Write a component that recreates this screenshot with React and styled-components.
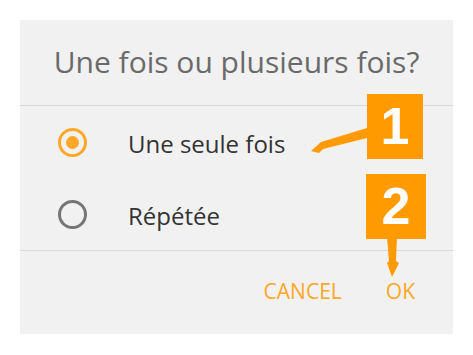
import React, { useState } from "react";
import styled, { createGlobalStyle } from "styled-components";

const GlobalStyle = createGlobalStyle`
  html, body {
    margin: 0;
    padding: 0;
    background: #ffffff;
  }
  body {
    font-family: "Open Sans", "Noto Sans", sans-serif;
  }
`;

const options = ["Une seule fois", "Répétée"];

export default function App() {
  const [selected, setSelected] = useState(0);

  return (
    <Page>
      <GlobalStyle />
      <Dialog>
        <Title>Une fois ou plusieurs fois?</Title>
        <OptionList>
          {options.map((label, i) => (
            <Option key={label} onClick={() => setSelected(i)}>
              <Radio checked={selected === i} />
              <OptionLabel>{label}</OptionLabel>
            </Option>
          ))}
        </OptionList>
        <Footer>
          <TextButton>CANCEL</TextButton>
          <TextButton>OK</TextButton>
        </Footer>

        <Callout top={74} left={347}>1</Callout>
        <Arrow width="80" height="40" viewBox="0 0 80 40" top={98} left={289}>
          <polygon points="58,10 58,20 14,31 10,35 2,33 12,24" fill="#ff9b00" />
        </Arrow>

        <Callout top={154} left={346} wide>2</Callout>
        <Arrow width="30" height="42" viewBox="0 0 30 42" top={217} left={357}>
          <polygon points="10,0 20,0 19,24 22,26 15,40 10,26 12,24" fill="#ff9b00" />
        </Arrow>
      </Dialog>
    </Page>
  );
}

const Page = styled.div`
  padding: 20px;
`;

const Dialog = styled.div`
  position: relative;
  width: 433px;
  height: 314px;
  background: #f1f1f1;
  display: flex;
  flex-direction: column;
`;

const Title = styled.div`
  height: 86px;
  display: flex;
  align-items: center;
  justify-content: center;
  font-size: 30px;
  color: #6a6a6a;
  border-bottom: 1px solid #d8d8d8;
  box-sizing: border-box;
  padding-bottom: 2px;
`;

const OptionList = styled.div`
  display: flex;
  flex-direction: column;
  border-bottom: 1px solid #d8d8d8;
`;

const Option = styled.div`
  height: 72px;
  display: flex;
  align-items: center;
  padding-left: 38px;
  cursor: pointer;
`;

const Radio = styled.span`
  width: 29px;
  height: 29px;
  box-sizing: border-box;
  border-radius: 50%;
  border: 3px solid ${(p) => (p.checked ? "#ffa726" : "#757575")};
  display: flex;
  align-items: center;
  justify-content: center;

  &::after {
    content: "";
    width: 13px;
    height: 13px;
    border-radius: 50%;
    background: #ffa726;
    display: ${(p) => (p.checked ? "block" : "none")};
  }
`;

const OptionLabel = styled.span`
  margin-left: 41px;
  font-size: 24px;
  color: #333333;
  padding-top: 2px;
`;

const Footer = styled.div`
  flex: 1;
  display: flex;
  justify-content: flex-end;
  align-items: center;
  gap: 44px;
  padding-right: 38px;
  padding-bottom: 4px;
`;

const TextButton = styled.button`
  border: none;
  background: none;
  padding: 0;
  font-family: "Open Sans", "Noto Sans", sans-serif;
  font-size: 21px;
  color: #ffa726;
  cursor: pointer;
`;

const Callout = styled.div`
  position: absolute;
  top: ${(p) => p.top}px;
  left: ${(p) => p.left}px;
  width: ${(p) => (p.wide ? 60 : 56)}px;
  height: 65px;
  background: #ff9b00;
  color: #ffffff;
  font-family: "Liberation Sans", Arial, sans-serif;
  font-weight: bold;
  font-size: 52px;
  line-height: 65px;
  text-align: center;
`;

const Arrow = styled.svg`
  position: absolute;
  top: ${(p) => p.top}px;
  left: ${(p) => p.left}px;
`;
